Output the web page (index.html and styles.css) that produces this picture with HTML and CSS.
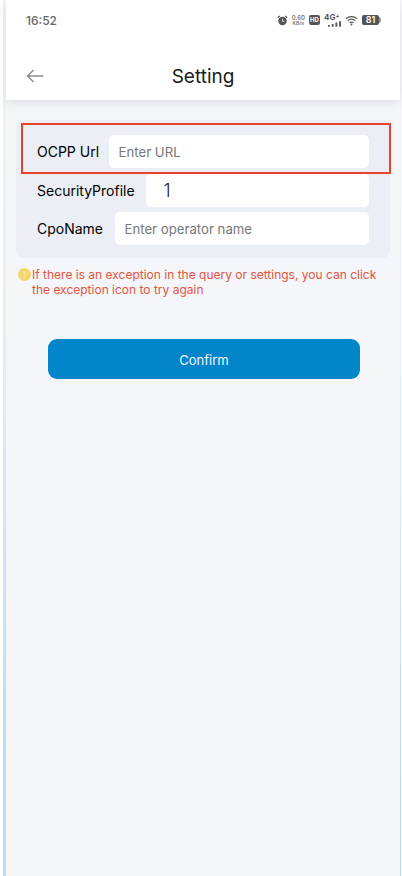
FILE: index.html
```html
<!DOCTYPE html>
<html lang="en">
<head>
<meta charset="utf-8">
<title>Setting</title>
<link rel="stylesheet" href="styles.css">
</head>
<body>
<div class="shell">
  <header class="top">
    <div class="status">
      <span class="time">16:52</span>
      <div class="status-icons">
        <svg class="i-alarm" viewBox="0 0 12 12"><circle cx="6" cy="6.500" r="4.600" fill="#555"/><path d="M1 3 3 1M11 3 9 1" stroke="#555" stroke-width="1.400"/><path d="M6 4v3h2" stroke="#ddd" stroke-width="1" fill="none"/></svg>
        <span class="speed"><span>0.60</span><span class="unit">KB/s</span></span>
        <span class="hd">HD</span>
        <span class="net"><span class="net-label">4G<sup class="plus">+</sup></span><svg viewBox="0 0 14 6" class="i-bars"><path d="M0 4h2v2H0zM4 3h2v3H4zM8 1.500h2V6H8zM12 0h2v6h-2z" fill="#555"/></svg></span>
        <svg class="i-wifi" viewBox="0 0 14 11"><path d="M1 3.500C4.500.5 9.500.5 13 3.500M3 5.800C5.300 3.900 8.700 3.900 11 5.800M5 8c1.200-1 2.800-1 4 0" stroke="#555" stroke-width="1.300" fill="none"/><circle cx="7" cy="9.800" r="1" fill="#555"/></svg>
        <span class="battery"><span class="batt-body">81</span><span class="batt-tip"></span></span>
      </div>
    </div>
    <div class="navbar">
      <svg class="back" viewBox="0 0 18 14"><path d="M17.500 7H1.500M7.500 1 1.500 7l6 6" stroke="#8f8f8f" stroke-width="1.500" fill="none"/></svg>
      <h1 class="title">Setting</h1>
    </div>
  </header>

  <main class="content">
    <section class="card">
      <div class="row row-url">
        <label class="label">OCPP Url</label>
        <div class="field placeholder">Enter URL</div>
      </div>
      <div class="row">
        <label class="label">SecurityProfile</label>
        <div class="field value">1</div>
      </div>
      <div class="row row-cpo">
        <label class="label">CpoName</label>
        <div class="field placeholder">Enter operator name</div>
      </div>
      <div class="highlight"></div>
    </section>

    <div class="notice">
      <span class="notice-dot">!</span>
      <p class="notice-text">If there is an exception in the query or settings, you can click the exception icon to try again</p>
    </div>

    <button class="confirm" type="button">Confirm</button>
  </main>
</div>
</body>
</html>
```

FILE: styles.css
```css
* { box-sizing: border-box; }
html, body { margin: 0; height: 100%; background: #fff; }
body { font-family: Inter, "Noto Sans", sans-serif; overflow: hidden; }

.shell {
  height: 876px;
  margin-left: 3px;
  margin-right: 1px;
  border-left: 3px solid;
  border-image: linear-gradient(#f2f5fb 0, #e4edf7 40%, #bcd9f0 90%) 1;
  border-right: 1px solid #dfe5ef;
  background: #f4f6fa;
  display: flex;
  flex-direction: column;
}

.top {
  height: 100px;
  background: #fff;
  box-shadow: 0 2px 10px rgba(0, 0, 0, .1);
  display: flex;
  flex-direction: column;
}
.status {
  height: 40px;
  padding: 0 19px 0 20px;
  display: flex;
  align-items: center;
  justify-content: space-between;
}
.time { font-size: 12px; font-weight: 500; color: #666; }
.status-icons { display: flex; align-items: center; gap: 4px; color: #555; }
.i-alarm { width: 11px; height: 11px; }
.speed { display: flex; flex-direction: column; align-items: center; font-size: 6px; line-height: 6px; font-weight: 600; color: #777; }
.speed .unit { font-size: 5px; line-height: 5px; }
.hd { width: 11px; height: 10px; border-radius: 2px; background: #555; color: #fff; font-size: 6px; font-weight: 700; text-align: center; line-height: 10px; }
.net { display: flex; flex-direction: column; align-items: flex-end; width: 17px; }
.net-label { font-size: 8px; line-height: 7px; font-weight: 700; color: #555; align-self: flex-start; white-space: nowrap; }
.plus { font-size: 6px; line-height: 0; vertical-align: 2px; }
.i-bars { width: 13px; height: 6px; }
.i-wifi { width: 13px; height: 11px; }
.battery { display: flex; align-items: center; }
.batt-body { width: 17px; height: 10px; border-radius: 2px; background: #555; color: #fff; font-size: 9px; line-height: 10px; font-weight: 600; text-align: center; }
.batt-tip { width: 2px; height: 6px; background: #999; border-radius: 0 2px 2px 0; }

.navbar {
  flex: 1;
  position: relative;
  display: flex;
  align-items: center;
  justify-content: center;
  padding-top: 12px;
}
.back { position: absolute; left: 20px; top: 29px; width: 18px; height: 14px; }
.title { margin: 0; font-size: 19px; font-weight: 400; color: #1a1a1a; }

.content { flex: 1; padding: 20px 10px 0 10px; }

.card {
  position: relative;
  background: #ebeef4;
  border-radius: 8px;
  height: 138px;
  padding: 15px 21px 0 21px;
  display: flex;
  flex-direction: column;
  gap: 6px;
}
.row { display: flex; align-items: center; gap: 11px; height: 33px; }
.row-url { gap: 10px; }
.row-cpo { margin-top: -1px; gap: 12px; }
.label { font-size: 14px; font-weight: 400; color: #000; white-space: nowrap; }
.field {
  flex: 1;
  height: 33px;
  background: #fff;
  border-radius: 5px;
  display: flex;
  align-items: center;
  padding-left: 9.500px;
  font-size: 14px;
}
.placeholder { color: #777; font-size: 13.200px; }
.value { color: #222; font-size: 18px; font-weight: 300; padding-left: 18px; }
.highlight {
  position: absolute;
  left: 5px;
  top: 3px;
  width: 370px;
  height: 51px;
  border: 2px solid #e8432c;
  pointer-events: none;
}

.notice { display: flex; margin: 9px 0 0 2px; align-items: flex-start; }
.notice-dot {
  flex: none;
  width: 13px;
  height: 13px;
  margin-top: 1px;
  margin-right: 1px;
  border-radius: 50%;
  background: #f6d56c;
  color: #fbe9a8;
  font-size: 9px;
  line-height: 13px;
  text-align: center;
  font-weight: 700;
}
.notice-text { margin: 0; font-size: 12px; line-height: 15px; color: #e4543f; }

.confirm {
  display: block;
  width: 312px;
  height: 40px;
  margin: 42px 0 0 32px;
  padding: 1px 0 0;
  border: none;
  border-radius: 9px;
  background: #0285cb;
  color: #f2f8fc;
  font-family: inherit;
  font-size: 13px;
}
```
